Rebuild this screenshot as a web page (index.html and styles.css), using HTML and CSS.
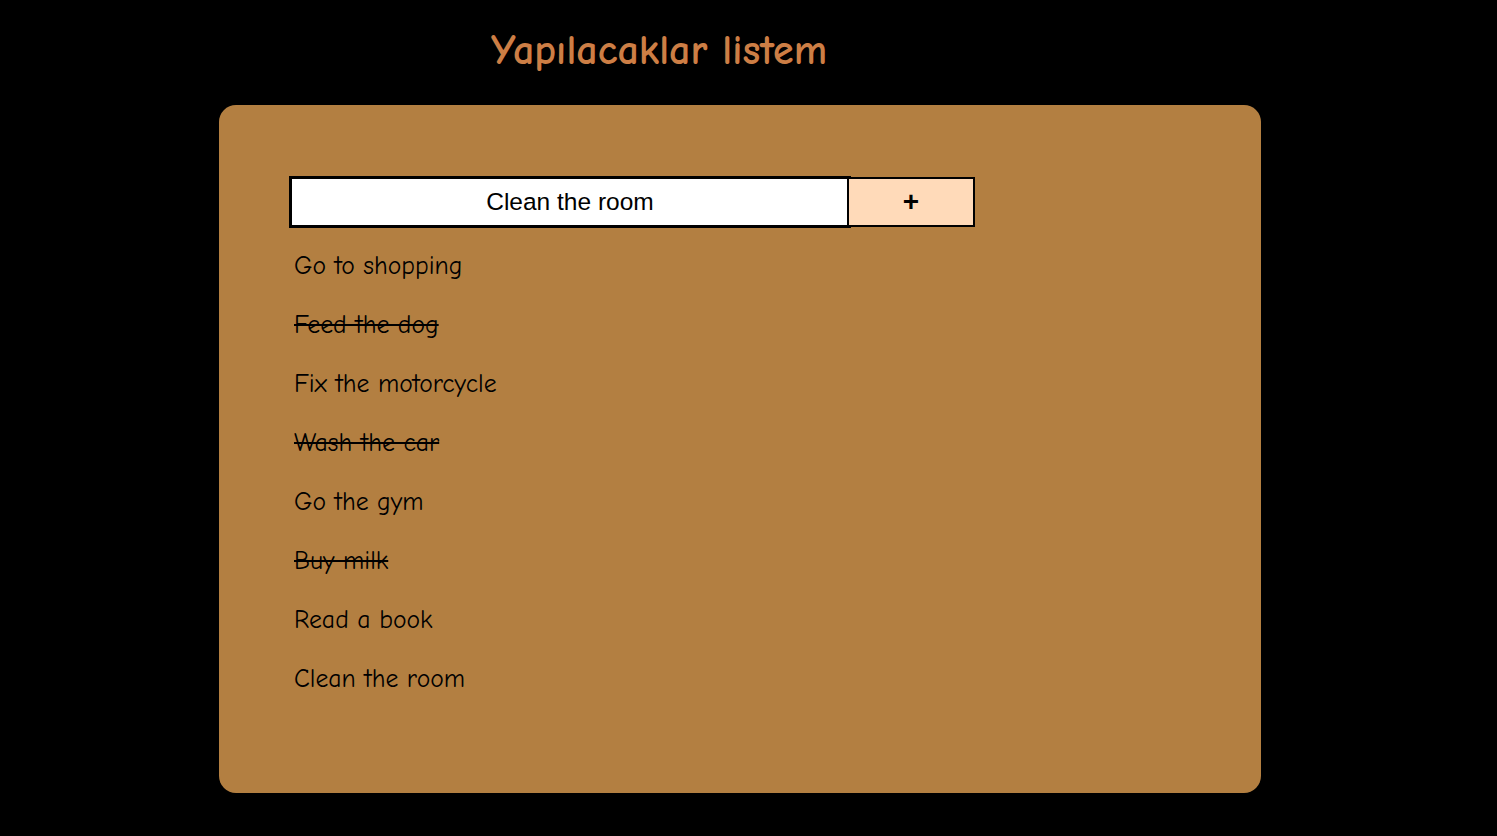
FILE: index.html
```html
<!DOCTYPE html>
<html lang="tr">
<head>
<meta charset="utf-8">
<title>Yapılacaklar listem</title>
<link rel="stylesheet" href="styles.css">
</head>
<body>
<header class="header">
  <h1 class="title">Yapılacaklar listem</h1>
</header>
<main class="card">
  <form class="add-form">
    <input class="add-input" type="text" value="Clean the room">
    <button class="add-btn" type="button">+</button>
  </form>
  <ul class="todo-list">
    <li class="todo">Go to shopping</li>
    <li class="todo done">Feed the dog</li>
    <li class="todo">Fix the motorcycle</li>
    <li class="todo done">Wash the car</li>
    <li class="todo">Go the gym</li>
    <li class="todo done">Buy milk</li>
    <li class="todo">Read a book</li>
    <li class="todo">Clean the room</li>
  </ul>
</main>
</body>
</html>
```
FILE: styles.css
```css
html, body {
  margin: 0;
  padding: 0;
  background: #000;
}
body {
  font-family: "Comic Sans MS", "Comic Neue", "Open Sans", sans-serif;
  min-height: 836px;
  overflow: hidden;
}
.header {
  height: 105px;
  display: flex;
  align-items: center;
  padding-left: 491px;
  box-sizing: border-box;
}
.title {
  margin: 0;
  color: #cd7e45;
  font-size: 42px;
  font-weight: 700;
  line-height: 1;
  position: relative;
  top: -2px;
}
.card {
  margin-left: 219px;
  width: 1042px;
  height: 688px;
  box-sizing: border-box;
  background: #b37f41;
  border-radius: 17px;
  padding: 71px 0 0 70px;
}
.add-form {
  display: flex;
  align-items: center;
  margin: 0;
}
.add-input {
  width: 562px;
  height: 52px;
  box-sizing: border-box;
  border: 3px solid #000;
  background: #fff;
  font-family: "Liberation Sans", Arial, sans-serif;
  font-size: 24.5px;
  color: #000;
  text-align: center;
  padding: 0;
  outline: none;
}
.add-btn {
  width: 128px;
  height: 50px;
  box-sizing: border-box;
  margin-left: -4px;
  border: 2px solid #000;
  background: #ffdab9;
  font-family: "Liberation Sans", Arial, sans-serif;
  font-size: 28px;
  font-weight: 700;
  color: #000;
  padding: 0;
  line-height: 1;
}
.todo-list {
  list-style: none;
  margin: 8px 0 0 0;
  padding: 0 0 0 5px;
}
.todo {
  height: 59px;
  display: flex;
  align-items: center;
  font-size: 25.7px;
  color: #000;
}
.done {
  text-decoration: line-through;
  text-decoration-thickness: 2px;
}
```
